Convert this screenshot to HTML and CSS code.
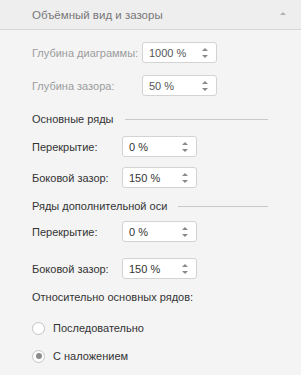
FILE: index.html
```html
<!doctype html>
<html lang="ru">
  <head>
    <meta charset="UTF-8" />
    <meta name="viewport" content="width=device-width, initial-scale=1.0" />
    <title>Объёмный вид и зазоры</title>
    <link rel="stylesheet" href="styles.css">
  </head>
  <body>
    <div class="panel">
      <div class="panel-header">
        <span class="panel-title">Объёмный вид и зазоры</span>
        <span class="caret"></span>
      </div>
      <div class="panel-body">
        <div class="row row-first disabled">
          <span class="label label-wide">Глубина диаграммы:</span>
          <div class="spin"><span class="spin-value">1000 %</span><span class="spin-arrows"><i class="up"></i><i class="down"></i></span></div>
        </div>
        <div class="row row-second disabled">
          <span class="label label-wide">Глубина зазора:</span>
          <div class="spin"><span class="spin-value">50 %</span><span class="spin-arrows"><i class="up"></i><i class="down"></i></span></div>
        </div>

        <div class="section section-main">
          <span class="section-title">Основные ряды</span>
          <span class="section-line"></span>
        </div>
        <div class="row row-overlap">
          <span class="label">Перекрытие:</span>
          <div class="spin"><span class="spin-value">0 %</span><span class="spin-arrows"><i class="up"></i><i class="down"></i></span></div>
        </div>
        <div class="row row-gap">
          <span class="label">Боковой зазор:</span>
          <div class="spin"><span class="spin-value">150 %</span><span class="spin-arrows"><i class="up"></i><i class="down"></i></span></div>
        </div>

        <div class="section section-extra">
          <span class="section-title">Ряды дополнительной оси</span>
          <span class="section-line"></span>
        </div>
        <div class="row row-overlap2">
          <span class="label">Перекрытие:</span>
          <div class="spin"><span class="spin-value">0 %</span><span class="spin-arrows"><i class="up"></i><i class="down"></i></span></div>
        </div>
        <div class="row row-gap2">
          <span class="label">Боковой зазор:</span>
          <div class="spin"><span class="spin-value">150 %</span><span class="spin-arrows"><i class="up"></i><i class="down"></i></span></div>
        </div>

        <div class="relative-title">Относительно основных рядов:</div>
        <label class="radio radio-first">
          <span class="radio-circle"></span>
          <span>Последовательно</span>
        </label>
        <label class="radio radio-second">
          <span class="radio-circle checked"></span>
          <span>С наложением</span>
        </label>
      </div>
    </div>
  </body>
</html>
```

FILE: styles.css
```css
body {
  margin: 0;
  background: #f4f4f5;
  font-family: "Liberation Sans", Arial, sans-serif;
  font-size: 11px;
  color: #333;
}
.panel {
  width: 301px;
  height: 375px;
  background: #f4f4f5;
}
.panel-header {
  height: 29px;
  border-bottom: 1px solid #d6d6d6;
  background: #eeeeef;
  display: flex;
  align-items: center;
  padding: 0 15px 0 32px;
  justify-content: space-between;
}
.panel-title {
  color: #777;
  font-size: 11.5px;
}
.caret {
  width: 0;
  height: 0;
  border-left: 3px solid transparent;
  border-right: 3px solid transparent;
  border-bottom: 3px solid #b0b0b0;
  margin-top: -2px;
}
.panel-body {
  padding-left: 32px;
}
.row {
  display: flex;
  align-items: center;
  height: 21px;
}
.label {
  width: 90px;
  white-space: nowrap;
}
.label-wide {
  width: 110px;
}
.disabled .label {
  color: #9c9c9c;
}
.disabled .spin-value {
  color: #555;
}
.spin {
  width: 59px;
  height: 19px;
  border: 1px solid #d3d3d3;
  border-radius: 3px;
  background: #fff;
  display: flex;
  align-items: center;
  justify-content: space-between;
  padding: 0 8px 0 6px;
  box-sizing: content-box;
}
.spin-value {
  color: #333;
}
.spin-arrows {
  display: flex;
  flex-direction: column;
  gap: 4px;
}
.spin-arrows i {
  width: 0;
  height: 0;
  border-left: 3px solid transparent;
  border-right: 3px solid transparent;
}
.spin-arrows .up {
  border-bottom: 3px solid #8a8a8a;
}
.spin-arrows .down {
  border-top: 3px solid #8a8a8a;
}
.row-first { margin-top: 12px; }
.row-second { margin-top: 12px; }
.section {
  display: flex;
  align-items: center;
  height: 14px;
  padding-right: 33px;
}
.section-title {
  white-space: nowrap;
  margin-right: 11px;
}
.section-line {
  flex: 1;
  height: 1px;
  background: #c9c9c9;
}
.section-main { margin-top: 16px; }
.row-overlap { margin-top: 10px; }
.row-gap { margin-top: 10px; }
.section-extra { margin-top: 11px; }
.row-overlap2 { margin-top: 8px; }
.row-gap2 { margin-top: 16px; }
.relative-title {
  height: 14px;
  line-height: 14px;
  margin-top: 11px;
}
.radio {
  display: flex;
  align-items: center;
  height: 16px;
  gap: 8px;
}
.radio-first { margin-top: 16px; }
.radio-second { margin-top: 12px; }
.radio-circle {
  width: 11px;
  height: 11px;
  border: 1px solid #c4c4c4;
  border-radius: 50%;
  background: #fff;
  position: relative;
}
.radio-circle.checked::after {
  content: "";
  position: absolute;
  left: 2.5px;
  top: 2.5px;
  width: 6px;
  height: 6px;
  border-radius: 50%;
  background: #8c8c8c;
}
```
